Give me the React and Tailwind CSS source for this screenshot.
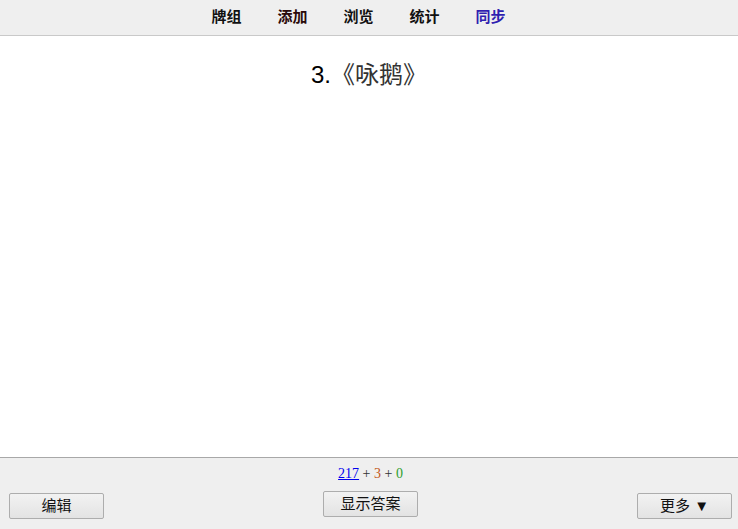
export default function App() {
  const nav = [
    { label: '牌组', color: 'text-[#111]' },
    { label: '添加', color: 'text-[#2a0a0a]' },
    { label: '浏览', color: 'text-[#111]' },
    { label: '统计', color: 'text-[#111]' },
    { label: '同步', color: 'text-[#2f1fb0]' },
  ];
  const btn =
    'h-[26px] w-[95px] border border-[#adadad] bg-gradient-to-b from-[#f2f2f2] to-[#e3e3e3] text-[15px] text-[#111] rounded-[2px]';
  return (
    <div className="flex h-[529px] w-[738px] flex-col bg-white font-['Liberation_Sans','Noto_Sans_CJK_SC',sans-serif]">
      <div className="flex h-[36px] items-center justify-center gap-[36px] border-b border-[#c9c9c9] bg-[#efefef] pr-[21px]">
        {nav.map((n) => (
          <span key={n.label} className={`text-[15px] font-bold ${n.color}`}>
            {n.label}
          </span>
        ))}
      </div>
      <div className="flex-1 pt-[21px] text-center">
        <span className="text-[24px] text-black">3.</span>
        <span className="text-[24px] text-[#333]">《咏鹅》</span>
      </div>
      <div className="h-[72px] border-t border-[#a8a8a8] bg-[#efefef] pl-[9px] pr-[6px]">
        <div className="pt-[6px] text-center font-['Liberation_Serif',serif] text-[14px] leading-[20px]">
          <span className="text-[#0000ee] underline">217</span>
          <span className="text-[#333]"> + </span>
          <span className="text-[#c35617]">3</span>
          <span className="text-[#333]"> + </span>
          <span className="text-[#2e9e2e]">0</span>
        </div>
        <div className="mt-[7px] flex items-start justify-between">
          <button className={`${btn} mt-[2px]`}>编辑</button>
          <button className={`${btn} border-[#7a9cc8]`}>显示答案</button>
          <button className={`${btn} mt-[2px]`}>更多 ▼</button>
        </div>
      </div>
    </div>
  );
}
